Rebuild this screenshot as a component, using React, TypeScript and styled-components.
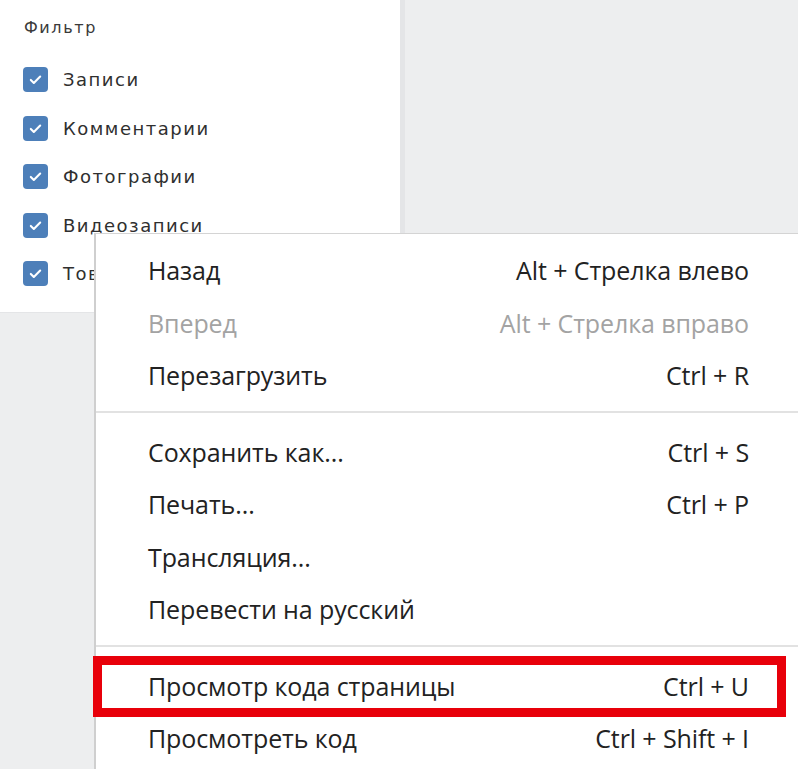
import React from 'react';
import styled, { createGlobalStyle } from 'styled-components';

const GlobalStyle = createGlobalStyle`
  html, body {
    margin: 0;
    padding: 0;
    background: #edeeef;
  }
`;

const filters = ['Записи', 'Комментарии', 'Фотографии', 'Видеозаписи', 'Товары'];

type MenuEntry =
  | { kind: 'item'; label: string; hotkey?: string; disabled?: boolean; marked?: boolean }
  | { kind: 'sep' };

const menu: MenuEntry[] = [
  { kind: 'item', label: 'Назад', hotkey: 'Alt + Стрелка влево' },
  { kind: 'item', label: 'Вперед', hotkey: 'Alt + Стрелка вправо', disabled: true },
  { kind: 'item', label: 'Перезагрузить', hotkey: 'Ctrl + R' },
  { kind: 'sep' },
  { kind: 'item', label: 'Сохранить как...', hotkey: 'Ctrl + S' },
  { kind: 'item', label: 'Печать...', hotkey: 'Ctrl + P' },
  { kind: 'item', label: 'Трансляция...' },
  { kind: 'item', label: 'Перевести на русский' },
  { kind: 'sep' },
  { kind: 'item', label: 'Просмотр кода страницы', hotkey: 'Ctrl + U', marked: true },
  { kind: 'item', label: 'Просмотреть код', hotkey: 'Ctrl + Shift + I' },
];

const Page = styled.div`
  position: relative;
  width: 798px;
  height: 769px;
  overflow: hidden;
  background: #edeeef;
`;

const FilterPanel = styled.section`
  width: 405px;
  height: 313px;
  box-sizing: border-box;
  padding: 16px 0 0 23px;
  background: #fff;
  border-right: 5px solid #e4e5e7;
  border-bottom: 1px solid #e4e5e7;
  font-family: 'DejaVu Sans', Verdana, sans-serif;
`;

const Title = styled.div`
  height: 24px;
  line-height: 24px;
  font-size: 16px;
  letter-spacing: 1.6px;
  color: #3a3a3a;
  padding-left: 1px;
`;

const CheckList = styled.ul`
  list-style: none;
  margin: 27px 0 0;
  padding: 0;
  display: flex;
  flex-direction: column;
  gap: 23.5px;
`;

const CheckRow = styled.li`
  display: flex;
  align-items: center;
  gap: 15px;
  height: 25px;
`;

const Box = styled.span`
  width: 25px;
  height: 25px;
  border-radius: 4px;
  background: #4d7fb9;
  display: flex;
  align-items: center;
  justify-content: center;
  flex-shrink: 0;
`;

const CheckLabel = styled.span`
  font-size: 18px;
  letter-spacing: 1.5px;
  color: #2f2f2f;
`;

const ContextMenu = styled.div`
  position: absolute;
  left: 94px;
  top: 233px;
  width: 730px;
  box-sizing: border-box;
  padding: 10px 0 40px;
  background: #fff;
  border-top: 1px solid #d4d4d4;
  border-left: 2px solid #cfcfcf;
  font-family: 'Open Sans', 'Noto Sans', sans-serif;
`;

const Item = styled.div<{ $disabled?: boolean }>`
  position: relative;
  height: 52.5px;
  display: flex;
  align-items: center;
  justify-content: space-between;
  padding: 0 75px 0 52px;
  font-size: 25px;
  letter-spacing: -0.1px;
  color: ${({ $disabled }) => ($disabled ? '#a3a3a3' : '#222')};
`;

const Separator = styled.div`
  height: 2px;
  margin: 9px 0 13px;
  background: #e2e2e2;
`;

const Highlight = styled.div`
  position: absolute;
  left: -3px;
  top: -4px;
  width: 693px;
  height: 61px;
  box-sizing: border-box;
  border: 9px solid #e8000a;
  pointer-events: none;
`;

const CheckMark = () => (
  <svg width="15" height="15" viewBox="0 0 16 16" fill="none">
    <path d="M3 8.5l3.2 3.2L13 4.8" stroke="#fff" strokeWidth="2.2" strokeLinecap="round" strokeLinejoin="round" />
  </svg>
);

export default function App() {
  return (
    <Page>
      <GlobalStyle />
      <FilterPanel>
        <Title>Фильтр</Title>
        <CheckList>
          {filters.map((f) => (
            <CheckRow key={f}>
              <Box>
                <CheckMark />
              </Box>
              <CheckLabel>{f}</CheckLabel>
            </CheckRow>
          ))}
        </CheckList>
      </FilterPanel>

      <ContextMenu>
        {menu.map((m, i) =>
          m.kind === 'sep' ? (
            <Separator key={i} />
          ) : (
            <Item key={i} $disabled={m.disabled}>
              <span>{m.label}</span>
              {m.hotkey && <span>{m.hotkey}</span>}
              {m.marked && <Highlight />}
            </Item>
          ),
        )}
      </ContextMenu>
    </Page>
  );
}
